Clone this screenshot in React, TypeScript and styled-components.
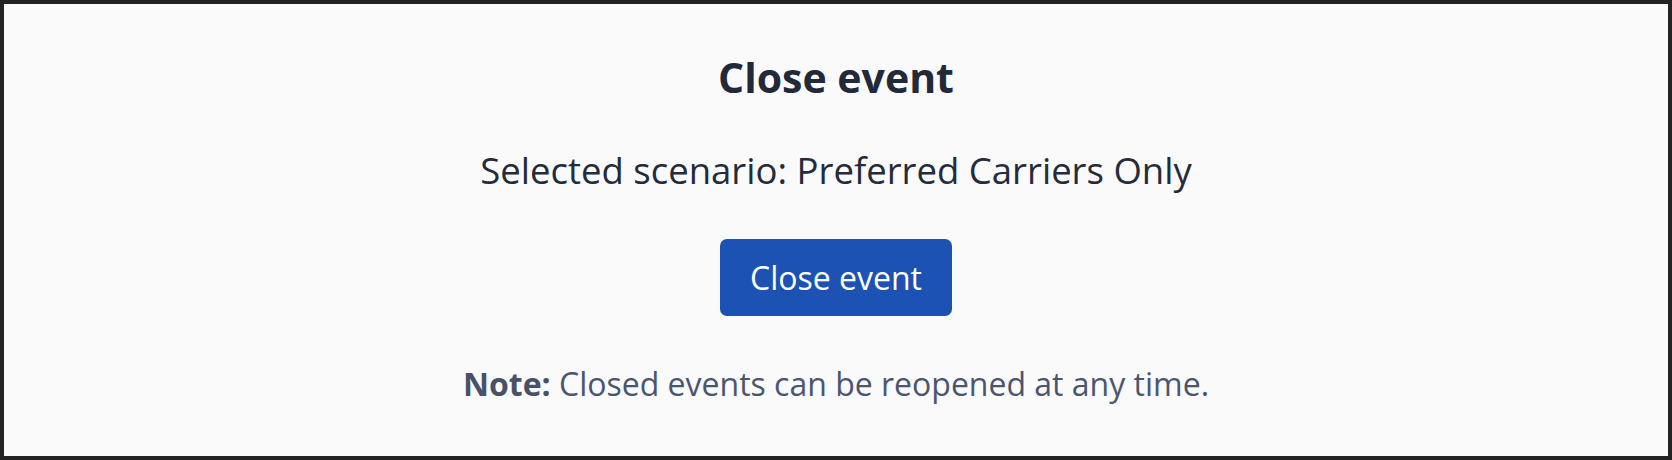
import React from "react";
import styled, { createGlobalStyle } from "styled-components";

const GlobalStyle = createGlobalStyle`
  html, body {
    margin: 0;
    padding: 0;
    background: #fafafa;
  }
  body {
    font-family: "Open Sans", "Noto Sans", sans-serif;
  }
  * { box-sizing: border-box; }
`;

const Frame = styled.div`
  width: 1672px;
  height: 460px;
  border: 4px solid #232323;
  background: #fafafa;
  display: flex;
  flex-direction: column;
  align-items: center;
  padding-top: 49px;
`;

const Title = styled.h1`
  margin: 0;
  font-size: 41px;
  line-height: 48px;
  font-weight: 700;
  color: #222938;
`;

const Scenario = styled.p`
  margin: 45px 0 0;
  font-size: 36.5px;
  line-height: 48px;
  font-weight: 400;
  color: #242b3a;
`;

const PrimaryButton = styled.button`
  margin-top: 45px;
  height: 77px;
  padding: 0 30px;
  border: none;
  border-radius: 7px;
  background: #1c52b4;
  color: #ffffff;
  font-family: "Open Sans", "Noto Sans", sans-serif;
  font-size: 32px;
  line-height: 48px;
  cursor: pointer;
`;

const Note = styled.p`
  margin: 47px 0 0;
  font-size: 32px;
  line-height: 42px;
  color: #4a5670;
`;

const NoteLabel = styled.strong`
  font-weight: 700;
  color: #475269;
`;

export default function App() {
  return (
    <>
      <GlobalStyle />
      <Frame>
        <Title>Close event</Title>
        <Scenario>Selected scenario: Preferred Carriers Only</Scenario>
        <PrimaryButton type="button">Close event</PrimaryButton>
        <Note>
          <NoteLabel>Note:</NoteLabel> Closed events can be reopened at any time.
        </Note>
      </Frame>
    </>
  );
}
